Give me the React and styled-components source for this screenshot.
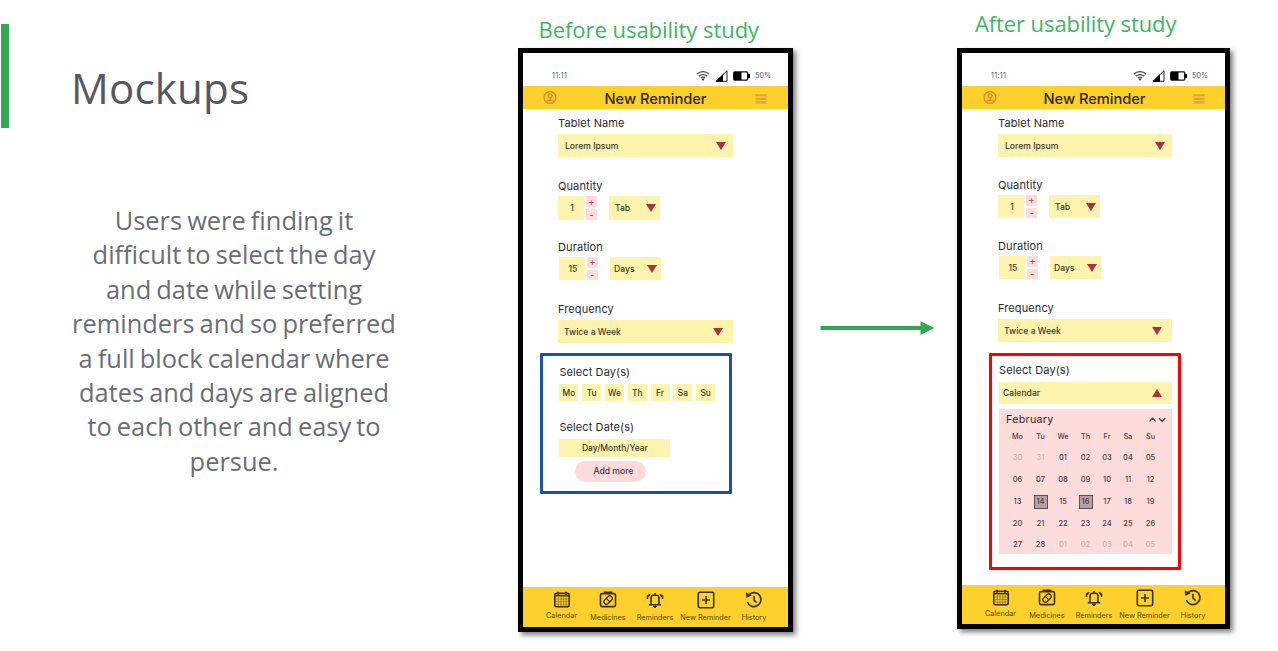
import React from "react";
import styled, { createGlobalStyle } from "styled-components";

const GlobalStyle = createGlobalStyle`
  *, *::before, *::after { box-sizing: border-box; }
  body { margin: 0; background: #fff; overflow: hidden; }
`;

const Slide = styled.main`
  display: flex;
  align-items: flex-start;
  width: 1278px;
  height: 651px;
  background: #fff;
  font-family: "Open Sans", "Noto Sans", sans-serif;
`;

const Intro = styled.section`
  flex: none;
  width: 518px;
  padding: 24px 0 0 1px;
`;

const TitleBar = styled.div`
  height: 104px;
  padding-left: 62px;
  border-left: 8px solid #31a851;
  display: flex;
  align-items: center;
`;

const Title = styled.h1`
  margin: 24px 0 0;
  font-size: 42px;
  font-weight: 400;
  line-height: 60px;
  letter-spacing: 0.2px;
  color: #55585d;
`;

const Body = styled.p`
  width: 400px;
  margin: 75px 0 0 33px;
  font-size: 25.4px;
  line-height: 34.4px;
  word-spacing: -1.5px;
  text-align: center;
  white-space: pre-line;
  color: #6a6e74;
`;

const Column = styled.section`
  flex: none;
  width: ${(p) => p.$width}px;
  padding-top: ${(p) => p.$top}px;
`;

const Caption = styled.h2`
  margin: 0 0 0 ${(p) => p.$indent}px;
  height: ${(p) => p.$height}px;
  font-size: 22px;
  font-weight: 400;
  line-height: 30px;
  letter-spacing: ${(p) => p.$spacing}px;
  white-space: nowrap;
  color: #3fb566;
`;

const ArrowColumn = styled.div`
  flex: none;
  width: 164px;
  padding: 319px 0 0 27px;
`;

const PhoneFrame = styled.article`
  display: flex;
  flex-direction: column;
  height: ${(p) => p.$height}px;
  border: 5px solid #000;
  background: #fff;
  box-shadow: 3px 3px 5px rgba(0, 0, 0, 0.5);
  font-family: Inter, Roboto, sans-serif;
  color: #26262a;
`;

const StatusBar = styled.div`
  display: flex;
  flex: none;
  align-items: center;
  height: 33px;
  padding: 12px 17px 0 29px;
  font-size: 7.2px;
  color: #555;
`;

const Clock = styled.span`
  flex: 1;
  letter-spacing: 0.3px;
`;

const StatusIcons = styled.span`
  display: flex;
  align-items: center;
  gap: 5px;
`;

const AppBar = styled.header`
  display: flex;
  flex: none;
  align-items: center;
  justify-content: space-between;
  height: 23px;
  padding: 0 ${(p) => 20 - p.$shift}px 0 ${(p) => 20 + p.$shift}px;
  background: #fed02b;
`;

const AppTitle = styled.h3`
  margin: 0;
  padding-top: 2px;
  font-size: 14.7px;
  font-weight: 500;
  line-height: 20px;
  letter-spacing: -0.05px;
  color: #2d270f;
`;

const Form = styled.div`
  flex: 1;
  padding: 7px 0 0 ${(p) => 35 + p.$shift}px;
`;

const Field = styled.div`
  margin-top: ${(p) => p.$top || 0}px;
`;

const Label = styled.div`
  height: 14px;
  margin-bottom: ${(p) => p.$gap || 3}px;
  font-size: 11px;
  line-height: 14px;
  letter-spacing: 0.1px;
  white-space: nowrap;
  color: #2c2c2e;
`;

const Select = styled.div`
  display: flex;
  align-items: center;
  justify-content: space-between;
  width: ${(p) => p.$width}px;
  height: ${(p) => p.$height || 23}px;
  padding: 0 ${(p) => p.$right}px 0 ${(p) => p.$left}px;
  background: #fff4ae;
  font-size: 8.6px;
  font-weight: 500;
  line-height: 12px;
  white-space: nowrap;
  color: #3a3930;
`;

const Triangle = styled.span`
  width: 0;
  height: 0;
  border: 5px solid transparent;
  border-width: ${(p) => (p.$up ? "0 5px 8px" : "8px 5px 0")};
  border-top-color: ${(p) => (p.$up ? "transparent" : "#a93343")};
  border-bottom-color: ${(p) => (p.$up ? "#a93343" : "transparent")};
`;

const Row = styled.div`
  display: flex;
  padding-left: ${(p) => p.$indent || 0}px;
`;

const Amount = styled.div`
  display: grid;
  place-items: center;
  width: 26px;
  height: ${(p) => p.$height}px;
  padding-left: 2px;
  background: #fff4ae;
  font-size: 8.6px;
  font-weight: 500;
  color: #3a3930;
`;

const Stepper = styled.div`
  display: flex;
  flex-direction: column;
  gap: 2px;
  width: 11px;
  height: ${(p) => p.$height}px;
  margin: 0 12px 0 2px;
`;

const Step = styled.span`
  display: grid;
  flex: 1;
  place-items: center;
  background: #ffdcdc;
  font-size: 8.5px;
  font-weight: 700;
  line-height: 8px;
  color: #b9535d;
`;

const Highlight = styled.section`
  width: 192px;
  height: ${(p) => p.$height}px;
  margin: ${(p) => p.$margin};
  padding: ${(p) => p.$padding};
  border: 3px solid ${(p) => p.$color};
  border-radius: 1px;
`;

const Chips = styled.div`
  display: flex;
  gap: 3.8px;
  margin-bottom: 19px;
`;

const Chip = styled.span`
  display: grid;
  place-items: center;
  width: 19px;
  height: 17px;
  background: #fff4ae;
  font-size: 8.4px;
  font-weight: 500;
  color: #3a3930;
`;

const DateInput = styled.div`
  display: grid;
  place-items: center;
  width: 111px;
  height: 18px;
  background: #fff4ae;
  font-size: 8.5px;
  font-weight: 500;
  color: #3a3930;
`;

const AddMore = styled.div`
  width: 71px;
  height: 21px;
  margin: 4px 0 0 16px;
  padding-left: 18px;
  border-radius: 11px;
  background: #ffdcdc;
  font-size: 8.6px;
  font-weight: 500;
  line-height: 21px;
  color: #3f3638;
`;

const Calendar = styled.div`
  width: 173px;
  height: 145px;
  margin-top: 5px;
  background: #ffdcdc;
`;

const Month = styled.div`
  display: flex;
  align-items: center;
  justify-content: space-between;
  height: 17px;
  padding: 4px 6px 0 7px;
  font-size: 10.7px;
  line-height: 14px;
  letter-spacing: 0.3px;
`;

const Week = styled.div`
  display: grid;
  grid-template-columns: 23px 23px 22px 23px 20px 22px 23px;
  place-items: center;
  height: ${(p) => p.$height || 22}px;
  padding-left: 7px;
`;

const Day = styled.span`
  display: grid;
  place-items: center;
  width: 14px;
  height: 14px;
  border: ${(p) => (p.$selected ? "1.5px solid #5d5153" : "0")};
  background: ${(p) => (p.$selected ? "#b5a0a2" : "none")};
  font-size: ${(p) => (p.$head ? 7.2 : 7.5)}px;
  font-weight: 500;
  line-height: 10px;
  color: ${(p) => (p.$muted ? "#c9b0b1" : "#4a4042")};
`;

const NavBar = styled.nav`
  display: flex;
  flex: none;
  height: ${(p) => p.$height}px;
  padding: 4px 0 0 15px;
  background: #fed02b;
`;

const NavItem = styled.div`
  display: flex;
  flex-direction: column;
  align-items: center;
  flex: none;
  width: ${(p) => p.$width}px;
  font-size: 7.3px;
  line-height: 9px;
  white-space: nowrap;
  color: #584812;
`;

const NavLabel = styled.span`
  margin-top: ${(p) => p.$drop}px;
`;

const NavSvg = styled.svg`
  width: 18px;
  height: 18px;
  flex: none;
  fill: none;
  stroke: #3a300b;
  stroke-width: 1.6;
  overflow: visible;
`;

const CalendarIcon = () => (
  <NavSvg viewBox="0 0 18 18">
    <rect x="1.8" y="2.4" width="14.4" height="13.4" rx="1.5" />
    <path d="M1.800 4.800h14.400M5 0.800v3M13 0.800v3" />
    <path d="M3 8h12M3 10.600h12M3 13.200h12M5.200 6v10M8 6v10M10.700 6v10M13.200 6v10" strokeWidth="0.400" />
  </NavSvg>
);

const MedicineIcon = () => (
  <NavSvg viewBox="0 0 18 18">
    <rect x="1.5" y="2.600" width="15" height="13" rx="1.600" />
    <path d="M5.500 2.200V1.200h7v1" />
    <rect x="4.300" y="6.600" width="9.600" height="5" rx="2.500" transform="rotate(-45 9 9.100)" strokeWidth="1.300" />
    <path d="M7.400 7.500l3.200 3.200" strokeWidth="1.200" />
  </NavSvg>
);

const BellIcon = () => (
  <NavSvg viewBox="0 0 18 18">
    <path d="M5 13.500V7.500Q5 4.300 7.500 4.300h3Q13 4.300 13 7.500v6M2.800 13.700h12.400M9 2v2" />
    <path d="M7.200 15h3.600L9 17z" fill="#3a300b" strokeWidth="0.800" />
    <path d="M1.500 8V6.200L4 3.400M0.800 5.600L3.800 3.200M16.500 8V6.200L14 3.400M17.200 5.600L14.200 3.200" strokeWidth="1.400" />
  </NavSvg>
);

const PlusIcon = () => (
  <NavSvg viewBox="0 0 18 18">
    <rect x="1.300" y="1.300" width="15.400" height="15.400" rx="1.600" />
    <path d="M9 5v8M5 9h8" />
  </NavSvg>
);

const HistoryIcon = () => (
  <NavSvg viewBox="0 0 18 18">
    <path d="M4.200 3.500A7 7 0 1 1 2.400 11" />
    <path d="M1 1.800l0.700 4.700 4.600-2.400z" fill="#3a300b" strokeWidth="0.600" />
    <path d="M9 4.800v4.300l2.700 2.700" />
  </NavSvg>
);

const NAV = [
  { label: "Calendar", Icon: CalendarIcon, width: 47, drop: 2 },
  { label: "Medicines", Icon: MedicineIcon, width: 46, drop: 3.5 },
  { label: "Reminders", Icon: BellIcon, width: 48, drop: 4 },
  { label: "New Reminder", Icon: PlusIcon, width: 53, drop: 4 },
  { label: "History", Icon: HistoryIcon, width: 44, drop: 3.5 },
];

const DAYS = ["Mo", "Tu", "We", "Th", "Fr", "Sa", "Su"];

const WEEKS = [
  ["30", "31", "01", "02", "03", "04", "05"],
  ["06", "07", "08", "09", "10", "11", "12"],
  ["13", "14", "15", "16", "17", "18", "19"],
  ["20", "21", "22", "23", "24", "25", "26"],
  ["27", "28", "01", "02", "03", "04", "05"],
];

const isOutside = (week, day) => (week === 0 && day < 2) || (week === 4 && day > 1);
const isSelected = (week, day) => week === 2 && (day === 1 || day === 3);

function Quantity({ label, value, unit, top, height, indent, unitPad }) {
  return (
    <Field $top={top}>
      <Label>{label}</Label>
      <Row $indent={indent}>
        <Amount $height={height}>{value}</Amount>
        <Stepper $height={height}>
          <Step>+</Step>
          <Step>-</Step>
        </Stepper>
        <Select $width={51} $height={height} $left={unitPad} $right={4.5}>
          {unit}
          <Triangle />
        </Select>
      </Row>
    </Field>
  );
}

function Phone({ height, selectWidth, shift, navHeight, children }) {
  return (
    <PhoneFrame $height={height}>
      <StatusBar>
        <Clock>11:11</Clock>
        <StatusIcons>
          <svg width="14" height="11" viewBox="0 0 14 11" fill="none" stroke="#444" strokeWidth="1.300">
            <path d="M0.800 4.100a9 9 0 0 1 12.400 0M2.900 6.200a6 6 0 0 1 8.200 0M4.900 8.200a3 3 0 0 1 4.200 0" />
            <circle cx="7" cy="9.500" r="1.100" fill="#222" stroke="none" />
          </svg>
          <svg width="13" height="12" viewBox="0 0 13 12">
            <path d="M1 11.300L12 0.700v10.600z" fill="#fff" stroke="#222" />
            <path d="M0.500 11.800L8 4.500v7.300z" fill="#000" />
          </svg>
          <svg width="17" height="10" viewBox="0 0 17 10">
            <rect x="0.700" y="0.900" width="14" height="8.200" rx="1" fill="#fff" stroke="#111" strokeWidth="1.300" />
            <path d="M1 1h7.500v8H1z" />
            <path d="M15 3h2v4h-2z" />
          </svg>
          50%
        </StatusIcons>
      </StatusBar>
      <AppBar $shift={shift}>
        <svg width="14" height="14" viewBox="0 0 14 14" fill="none" stroke="#d9892c" strokeWidth="1.300">
          <circle cx="7" cy="6.500" r="5.900" />
          <circle cx="7" cy="4.900" r="2" />
          <path d="M7 7v3.500M3.500 10.300c1-1.500 6-1.500 7 0" />
        </svg>
        <AppTitle>New Reminder</AppTitle>
        <svg width="14" height="12" viewBox="0 0 14 12" stroke="#e3a136" strokeWidth="2.200">
          <path d="M1.500 3.300h11M1.500 6.800h11M1.500 10.300h11" />
        </svg>
      </AppBar>
      <Form $shift={shift}>
        <Field>
          <Label $gap={4}>Tablet Name</Label>
          <Select $width={selectWidth} $left={7} $right={7}>
            Lorem Ipsum
            <Triangle />
          </Select>
        </Field>
        <Quantity label="Quantity" value="1" unit="Tab" top={22 - shift} height={24 - shift} unitPad={6} />
        <Quantity label="Duration" value="15" unit="Days" top={20 + shift} height={23} indent={1} unitPad={4} />
        <Field $top={22}>
          <Label $gap={4}>Frequency</Label>
          <Select $width={selectWidth} $left={6} $right={10.5}>
            Twice a Week
            <Triangle />
          </Select>
        </Field>
        {children}
      </Form>
      <NavBar $height={navHeight}>
        {NAV.map(({ label, Icon, width, drop }) => (
          <NavItem key={label} $width={width}>
            <Icon />
            <NavLabel $drop={drop}>{label}</NavLabel>
          </NavItem>
        ))}
      </NavBar>
    </PhoneFrame>
  );
}

export default function App() {
  return (
    <>
      <GlobalStyle />
      <Slide>
        <Intro>
          <TitleBar>
            <Title>Mockups</Title>
          </TitleBar>
          <Body>
            {`Users were finding it
            difficult to select the day
            and date while setting
            reminders and so preferred
            a full block calendar where
            dates and days are aligned
            to each other and easy to
            persue.`}
          </Body>
        </Intro>
        <Column $width={275} $top={14}>
          <Caption $indent={20.5} $height={34} $spacing={-0.04}>
            Before usability study
          </Caption>
          <Phone height={584} selectWidth={175} shift={0} navHeight={40}>
            <Highlight $color="#1d50ae" $height={141} $margin="10px 0 0 -18px" $padding="9px 0 0 16.400px">
              <Label $gap={5}>Select Day(s)</Label>
              <Chips>
                {DAYS.map((day) => (
                  <Chip key={day}>{day}</Chip>
                ))}
              </Chips>
              <Label $gap={5}>Select Date(s)</Label>
              <DateInput>Day/Month/Year</DateInput>
              <AddMore>Add more</AddMore>
            </Highlight>
          </Phone>
        </Column>
        <ArrowColumn>
          <svg width="116" height="16" viewBox="0 0 116 16" fill="#31a851">
            <path d="M0.500 6h100v4h-100zM100.500 1.300L114.500 8.100 100.500 15z" />
          </svg>
        </ArrowColumn>
        <Column $width={273} $top={8}>
          <Caption $indent={18} $height={40} $spacing={-0.1}>
            After usability study
          </Caption>
          <Phone height={581} selectWidth={174} shift={1} navHeight={39}>
            <Highlight $color="#fb0207" $height={217} $margin="11px 0 0 -9px" $padding="7px 0 0 7px">
              <Label $gap={5}>Select Day(s)</Label>
              <Select $width={173} $height={22} $left={4} $right={10}>
                Calendar
                <Triangle $up />
              </Select>
              <Calendar>
                <Month>
                  February
                  <svg width="18" height="6" viewBox="0 0 18 6" fill="none" stroke="#4a4043" strokeWidth="1.300">
                    <path d="M1.500 4.400L4.600 1.200l3.100 3.200M11 1.200l3.200 3.100 3.100-3.100" />
                  </svg>
                </Month>
                <Week $height={21}>
                  {DAYS.map((day) => (
                    <Day key={day} $head>
                      {day}
                    </Day>
                  ))}
                </Week>
                {WEEKS.map((week, w) => (
                  <Week key={w} $height={w === 4 ? 19 : 22}>
                    {week.map((day, d) => (
                      <Day key={d} $muted={isOutside(w, d)} $selected={isSelected(w, d)}>
                        {day}
                      </Day>
                    ))}
                  </Week>
                ))}
              </Calendar>
            </Highlight>
          </Phone>
        </Column>
      </Slide>
    </>
  );
}
